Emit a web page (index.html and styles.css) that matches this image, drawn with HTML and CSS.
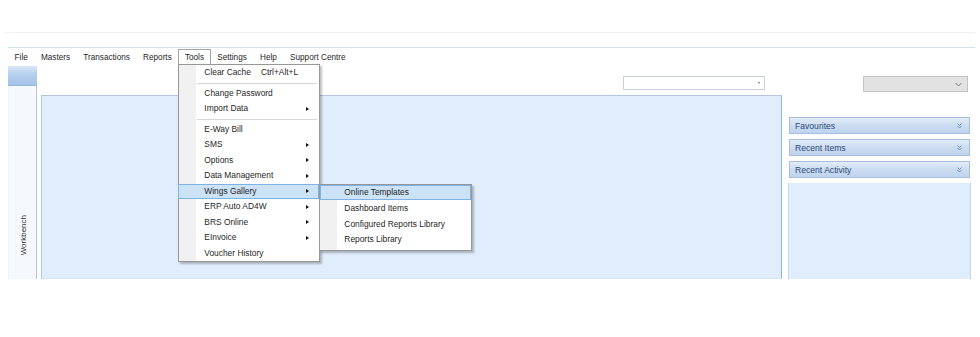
FILE: index.html
```html
<!DOCTYPE html>
<html>
  <head>
    <title>Workbench</title>
    <meta charset="utf-8">
    <link rel="stylesheet" href="styles.css">
  </head>
  <body>
    <div class="titlebar"></div>
    <div class="ribbon"></div>

    <ul class="menubar">
      <li>File</li>
      <li>Masters</li>
      <li>Transactions</li>
      <li>Reports</li>
      <li class="open">Tools
        <ul class="dropdown">
          <li><span>Clear Cache</span><span class="key">Ctrl+Alt+L</span></li>
          <li class="sep"></li>
          <li><span>Change Password</span></li>
          <li class="sub"><span>Import Data</span></li>
          <li class="sep"></li>
          <li><span>E-Way Bill</span></li>
          <li class="sub"><span>SMS</span></li>
          <li class="sub"><span>Options</span></li>
          <li class="sub"><span>Data Management</span></li>
          <li class="sub hover"><span>Wings Gallery</span>
            <ul class="dropdown submenu">
              <li class="hover"><span>Online Templates</span></li>
              <li><span>Dashboard Items</span></li>
              <li><span>Configured Reports Library</span></li>
              <li><span>Reports Library</span></li>
            </ul>
          </li>
          <li class="sub"><span>ERP Auto AD4W</span></li>
          <li class="sub"><span>BRS Online</span></li>
          <li class="sub"><span>EInvoice</span></li>
          <li><span>Voucher History</span></li>
        </ul>
      </li>
      <li>Settings</li>
      <li>Help</li>
      <li>Support Centre</li>
    </ul>

    <div class="workarea">
      <div class="strip">
        <div class="strip-head"></div>
        <div class="strip-body"><span class="vertical">Workbench</span></div>
      </div>

      <div class="main">
        <div class="toolbar toolbar-main">
          <div class="combo"><span class="combo-arrow"></span></div>
        </div>
        <div class="panel"></div>
      </div>

      <div class="side">
        <div class="toolbar toolbar-side">
          <div class="combo combo-grey">
            <svg width="7" height="5" viewBox="0 0 7 5"><path d="M0.5 1 L3.5 4 L6.5 1" fill="none" stroke="#7a7a7a" stroke-width="1"/></svg>
          </div>
        </div>
        <div class="side-panel">
          <div class="bar">Favourites <svg class="chev" width="5" height="6" viewBox="0 0 5 6"><path d="M0.5 0.5 L2.5 2.5 L4.5 0.5 M0.5 3 L2.5 5 L4.5 3" fill="none" stroke="#6f8fbb" stroke-width="1"/></svg></div>
          <div class="bar">Recent Items <svg class="chev" width="5" height="6" viewBox="0 0 5 6"><path d="M0.5 0.5 L2.5 2.5 L4.5 0.5 M0.5 3 L2.5 5 L4.5 3" fill="none" stroke="#6f8fbb" stroke-width="1"/></svg></div>
          <div class="bar">Recent Activity <svg class="chev" width="5" height="6" viewBox="0 0 5 6"><path d="M0.5 0.5 L2.5 2.5 L4.5 0.5 M0.5 3 L2.5 5 L4.5 3" fill="none" stroke="#6f8fbb" stroke-width="1"/></svg></div>
          <div class="side-fill"></div>
        </div>
      </div>
    </div>
  </body>
</html>
```

FILE: styles.css
```css
body {
  margin: 0;
  width: 980px;
  height: 337px;
  background: #fff;
  font-family: "Liberation Sans", Arial, sans-serif;
  font-size: 8.2px;
  color: #1f1f1f;
  overflow: hidden;
}

ul {
  list-style: none;
  margin: 0;
  padding: 0;
}

.titlebar {
  height: 32px;
  margin: 0 5px;
  border-bottom: 1px solid #edf0f4;
}

.ribbon {
  height: 14px;
  margin: 0 5px 0 8px;
  border-bottom: 1px solid #d5e1ee;
}

/* menu bar */

.menubar {
  display: flex;
  height: 18px;
  padding-left: 8px;
  padding-top: 1px;
  box-sizing: border-box;
  position: relative;
  z-index: 5;
}

.menubar > li {
  position: relative;
  padding: 0 5.6px;
  line-height: 16px;
  height: 17px;
  box-sizing: border-box;
  border: 1px solid transparent;
  border-bottom: 0;
}

.menubar > li.open {
  border-color: #a3a3a3;
  background: #fff;
  z-index: 3;
}

/* dropdowns */

.dropdown {
  position: absolute;
  left: -1px;
  top: 14px;
  width: 142px;
  box-sizing: border-box;
  padding: 0 2px 0;
  background: linear-gradient(to right, #f1f1f1 0, #f1f1f1 17px, #fff 17px);
  border: 1px solid #979797;
  box-shadow: 2px 2px 2px rgba(0, 0, 0, .25);
  z-index: 2;
  font-size: 8.4px;
}

.dropdown > li {
  position: relative;
  display: flex;
  justify-content: space-between;
  align-items: center;
  height: 15.5px;
  padding: 0 8px 0 22px;
  box-sizing: border-box;
  line-height: 15px;
  white-space: nowrap;
  border: 1px solid transparent;
}

.dropdown > li.sep {
  height: 5px;
  border: 0;
  margin-left: 16px;
  padding: 0;
  background: linear-gradient(#fff 2px, #d7d7d7 2px, #d7d7d7 3px, #fff 3px);
}

.dropdown > li .key {
  margin-left: 10px;
  padding-right: 12px;
}

.dropdown > li.sub::after {
  content: "";
  border-left: 3px solid #111;
  border-top: 2.5px solid transparent;
  border-bottom: 2.5px solid transparent;
  margin-right: -1px;
}

.dropdown > li.hover {
  background: #cce2f7;
  border-color: #7fb2e4;
  margin: 0 -2px 0 -3px;
  padding-left: 25px;
  padding-right: 10px;
}

.submenu {
  left: calc(100% + 1px);
  top: -1px;
  width: 153px;
  padding: 0 1px 2px;
}

.submenu > li {
  padding-left: 22px;
}

.submenu > li.hover {
  margin: 0 -1px 1px -1px;
  padding-left: 23px;
}

/* work area */

.workarea {
  display: flex;
  height: 213px;
  margin-left: 8px;
}

.strip {
  display: flex;
  flex-direction: column;
  width: 29px;
  margin-right: 4px;
}

.strip-head {
  height: 19px;
  background: linear-gradient(#dae7f6, #b5cfee 45%, #a5c3e8);
  border-bottom: 1px solid #9bb8dc;
}

.strip-body {
  flex: 1;
  display: flex;
  align-items: flex-end;
  justify-content: center;
  padding-bottom: 24px;
  background: #f5f9fe;
  border-right: 1px solid #b5c6dc;
  border-left: 1px solid #eef3f9;
}

.vertical {
  writing-mode: vertical-rl;
  transform: rotate(180deg);
  font-size: 8px;
  color: #333;
  margin-left: 2px;
}

.main {
  display: flex;
  flex-direction: column;
  width: 741px;
  margin-right: 6px;
}

.toolbar {
  display: flex;
  justify-content: flex-end;
  height: 29px;
  padding-top: 10px;
  box-sizing: border-box;
}

.toolbar-main {
  padding-right: 17px;
}

.toolbar-side {
  padding-right: 3px;
}

.combo {
  display: flex;
  align-items: center;
  justify-content: flex-end;
  width: 142px;
  height: 14px;
  box-sizing: border-box;
  background: #fff;
  border: 1px solid #cbd1d9;
  padding-right: 4px;
}

.combo-arrow {
  border-top: 2px solid #666;
  border-left: 1.5px solid transparent;
  border-right: 1.5px solid transparent;
}

.combo-grey {
  width: 105px;
  height: 16px;
  background: #e2e2e2;
  border-color: #c3c3c3;
  padding-right: 5px;
}

.panel {
  flex: 1;
  background: #e0edfc;
  border: 1px solid #b3c7e2;
  border-right-color: #9fb1c9;
  border-bottom-color: #d8e3f1;
}

.side {
  display: flex;
  flex-direction: column;
  width: 183px;
}

.side-panel {
  flex: 1;
  display: flex;
  flex-direction: column;
  padding-top: 22px;
  background: #fff;
}

.bar {
  display: flex;
  justify-content: space-between;
  align-items: center;
  height: 17px;
  margin: 0 1px 5px 1px;
  padding: 0 7px 0 5px;
  box-sizing: border-box;
  background: linear-gradient(#e3ecf8, #cbdcf1 50%, #bfd3ee);
  border: 1px solid #a7bedd;
  color: #2c4a78;
  font-size: 8.6px;
}

.bar:last-of-type {
  margin-bottom: 0;
}

.side-fill {
  flex: 1;
  background: #e0edfc;
  border-left: 1px solid #c7d6ea;
  border-right: 1px solid #c7d6ea;
}
```
